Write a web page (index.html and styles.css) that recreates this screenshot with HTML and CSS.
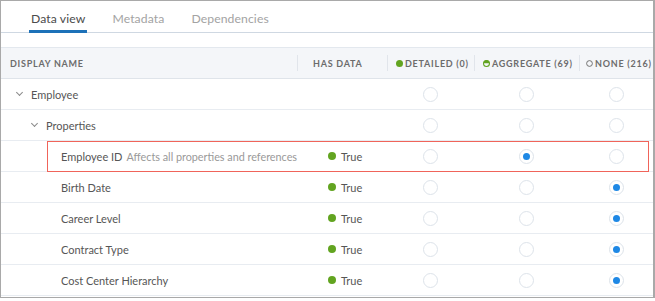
FILE: index.html
```html
<!DOCTYPE html>
<html lang="en">
<head>
    <meta charset="UTF-8">
    <title>Data view</title>
    <link rel="stylesheet" href="styles.css">
</head>
<body>
    <div class="panel">
        <!-- Tabs -->
        <div class="tabs">
            <a class="tab active">Data view</a>
            <a class="tab">Metadata</a>
            <a class="tab">Dependencies</a>
        </div>

        <!-- Grid -->
        <div class="grid">
            <div class="row head">
                <div class="cell name">DISPLAY NAME</div>
                <div class="cell data">HAS DATA</div>
                <div class="cell lvl">
                    <svg width="7" height="7" viewBox="0 0 8 8"><circle cx="4" cy="4" r="4" fill="#62a420"/></svg>
                    DETAILED (0)
                </div>
                <div class="cell lvl">
                    <svg width="7" height="7" viewBox="0 0 8 8"><circle cx="4" cy="4" r="3.4" fill="none" stroke="#62a420" stroke-width="1.2"/><path d="M0.6 3.6 A3.4 3.4 0 0 1 7.4 3.6 Z" fill="#62a420"/></svg>
                    AGGREGATE (69)
                </div>
                <div class="cell lvl">
                    <svg width="7" height="7" viewBox="0 0 8 8"><circle cx="4" cy="4" r="3.3" fill="none" stroke="#6d6d6d" stroke-width="1.1"/></svg>
                    NONE (216)
                </div>
            </div>

            <div class="row">
                <div class="cell name lvl0"><span class="caret"></span>Employee</div>
                <div class="cell data"></div>
                <div class="cell pick"><span class="radio"></span></div>
                <div class="cell pick"><span class="radio"></span></div>
                <div class="cell pick"><span class="radio"></span></div>
            </div>

            <div class="row">
                <div class="cell name lvl1"><span class="caret"></span>Properties</div>
                <div class="cell data"></div>
                <div class="cell pick"><span class="radio"></span></div>
                <div class="cell pick"><span class="radio"></span></div>
                <div class="cell pick"><span class="radio"></span></div>
            </div>

            <div class="row marked">
                <div class="cell name lvl2">Employee ID <span class="hint">Affects all properties and references</span></div>
                <div class="cell data"><span class="dot"></span>True</div>
                <div class="cell pick"><span class="radio"></span></div>
                <div class="cell pick"><span class="radio on"></span></div>
                <div class="cell pick"><span class="radio"></span></div>
            </div>

            <div class="row">
                <div class="cell name lvl2">Birth Date</div>
                <div class="cell data"><span class="dot"></span>True</div>
                <div class="cell pick"><span class="radio"></span></div>
                <div class="cell pick"><span class="radio"></span></div>
                <div class="cell pick"><span class="radio on"></span></div>
            </div>

            <div class="row">
                <div class="cell name lvl2">Career Level</div>
                <div class="cell data"><span class="dot"></span>True</div>
                <div class="cell pick"><span class="radio"></span></div>
                <div class="cell pick"><span class="radio"></span></div>
                <div class="cell pick"><span class="radio on"></span></div>
            </div>

            <div class="row">
                <div class="cell name lvl2">Contract Type</div>
                <div class="cell data"><span class="dot"></span>True</div>
                <div class="cell pick"><span class="radio"></span></div>
                <div class="cell pick"><span class="radio"></span></div>
                <div class="cell pick"><span class="radio on"></span></div>
            </div>

            <div class="row">
                <div class="cell name lvl2">Cost Center Hierarchy</div>
                <div class="cell data"><span class="dot"></span>True</div>
                <div class="cell pick"><span class="radio"></span></div>
                <div class="cell pick"><span class="radio"></span></div>
                <div class="cell pick"><span class="radio on"></span></div>
            </div>
        </div>
    </div>
</body>
</html>
```

FILE: styles.css
```css
body {
    margin: 0;
    font-family: 'Lato', 'Open Sans', sans-serif;
    background-color: #fff;
    color: #565656;
}

.panel {
    width: 652px;
    height: 296px;
    border: 1px solid #a9a9a9;
    border-right-width: 2px;
    overflow: hidden;
    background-color: #fff;
}

/* Tabs */
.tabs {
    display: flex;
    height: 31px;
    padding-left: 28px;
    border-bottom: 1px solid #cfd8e2;
}

.tab {
    display: flex;
    align-items: center;
    padding: 5px 2px 0;
    margin-right: 23px;
    font-size: 12.2px;
    letter-spacing: 0.1px;
    color: #a3a3a3;
    border-bottom: 3px solid transparent;
    margin-bottom: -1px;
}

.tab.active {
    color: #4b4b4b;
    border-bottom-color: #1d71b8;
}

/* Grid */
.grid {
    margin-top: 14px;
}

.row {
    display: grid;
    grid-template-columns: 296px 90px 87px 105px 1fr;
    height: 30px;
    border-bottom: 1px solid #e8ecf1;
    align-items: center;
}

.row.head {
    height: 30px;
    background-color: #f4f6f9;
    border-top: 1px solid #e3e8ee;
    border-bottom: 1px solid #dfe4ea;
}

.head .cell {
    font-size: 9px;
    font-weight: 700;
    letter-spacing: 0.75px;
    color: #6c6c6c;
    height: 16px;
    display: flex;
    align-items: center;
    border-left: 1px solid #e1e5eb;
}

.head .cell.name {
    border-left: none;
    padding-left: 9px;
}

.head .cell.data {
    padding-left: 15px;
}

.head .cell.lvl {
    padding-left: 8px;
    gap: 2px;
}

.head .cell.lvl:last-child {
    padding-left: 6px;
}

.cell {
    font-size: 11px;
    white-space: nowrap;
}

.cell.name {
    display: flex;
    align-items: center;
}

.lvl0 {
    padding-left: 14px;
}

.lvl1 {
    padding-left: 29px;
}

.lvl2 {
    padding-left: 60px;
}

.caret {
    width: 4px;
    height: 4px;
    border-right: 1px solid #8a8a8a;
    border-bottom: 1px solid #8a8a8a;
    transform: rotate(45deg);
    margin: 0 9px 3px 2px;
}

.hint {
    color: #999;
    margin-left: 4px;
    font-size: 10.8px;
}

.cell.data {
    display: flex;
    align-items: center;
    padding-left: 31px;
}

.dot {
    width: 8px;
    height: 8px;
    border-radius: 50%;
    background-color: #62a420;
    margin-right: 5px;
}

.cell.pick {
    display: flex;
    justify-content: center;
}

.radio {
    width: 13px;
    height: 13px;
    border: 1px solid #dde3ea;
    border-radius: 50%;
    background-color: #fff;
    display: flex;
    align-items: center;
    justify-content: center;
}

.radio.on::after {
    content: '';
    width: 7px;
    height: 7px;
    border-radius: 50%;
    background-color: #1e88e5;
}

/* Highlighted row */
.row.marked {
    position: relative;
}

.row.marked::before {
    content: '';
    position: absolute;
    left: 46px;
    right: 4px;
    top: 0;
    bottom: -1px;
    border: 1px solid #f0645a;
    pointer-events: none;
}
```
